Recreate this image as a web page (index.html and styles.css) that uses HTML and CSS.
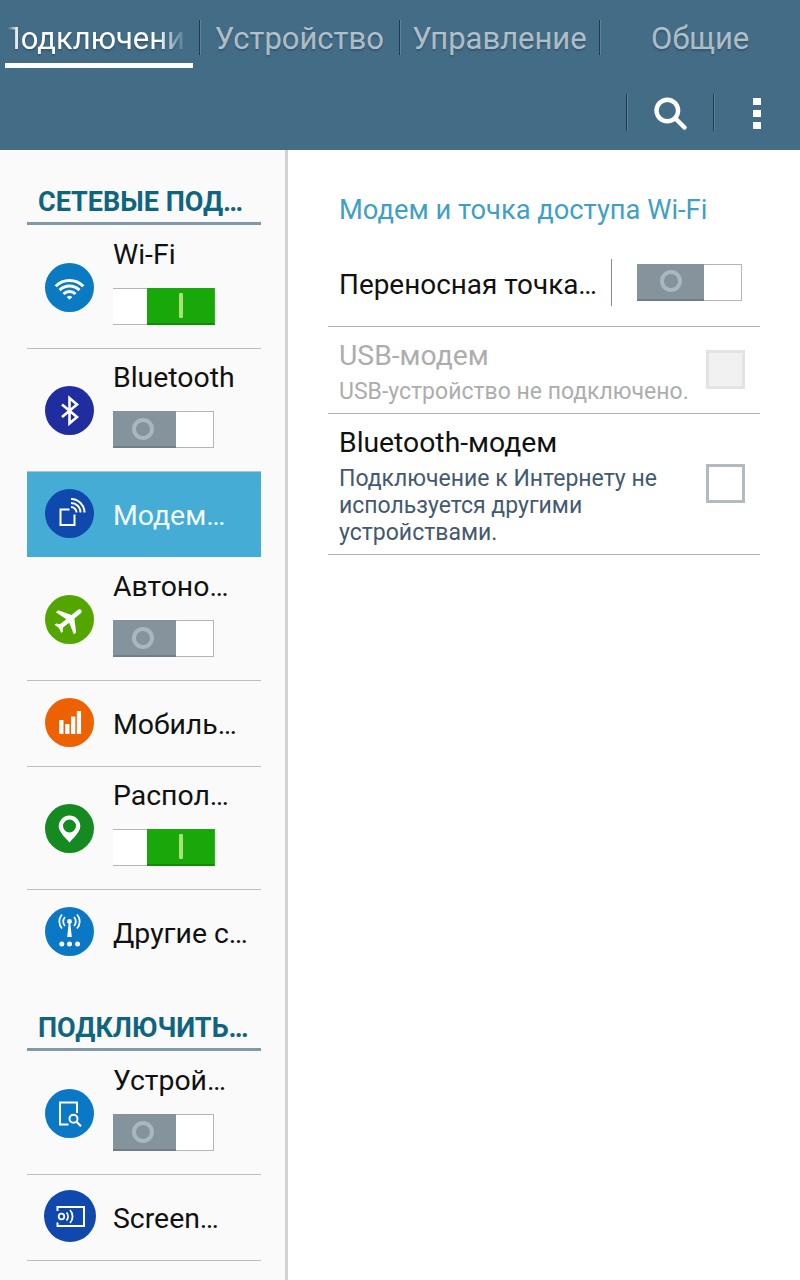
FILE: index.html
```html
<!DOCTYPE html>
<html lang="ru">
<head>
    <meta charset="UTF-8">
    <meta name="viewport" content="width=device-width, initial-scale=1.0">
    <title>Настройки</title>
    <link rel="stylesheet" href="styles.css">
</head>
<body>
    <!-- Top bar -->
    <header class="topbar">
        <nav class="tabs">
            <div class="tab tab-active"><div class="tab-clip"><span class="tab-label">Подключение</span></div></div>
            <span class="bar-sep"></span>
            <div class="tab">Устройство</div>
            <span class="bar-sep"></span>
            <div class="tab tab-third">Управление</div>
            <span class="bar-sep"></span>
            <div class="tab tab-last">Общие</div>
        </nav>
        <div class="actions">
            <span class="bar-sep"></span>
            <div class="action action-search">
                <svg width="36" height="36" viewBox="0 0 36 36"><circle cx="15.3" cy="15.5" r="10.8" fill="none" stroke="#fff" stroke-width="4.4"/><path d="M24 24l8.500 8.500" stroke="#fff" stroke-width="4.500" stroke-linecap="round"/></svg>
            </div>
            <span class="bar-sep"></span>
            <div class="action action-more">
                <i class="dot"></i><i class="dot"></i><i class="dot"></i>
            </div>
        </div>
    </header>

    <main class="content">
        <!-- Left list -->
        <aside class="sidebar">
            <h2 class="section-title">СЕТЕВЫЕ ПОД…</h2>
            <ul class="list">
                <li class="item">
                    <span class="icon icon-wifi">
                        <svg viewBox="0 0 49 49"><path d="M10.7 23.2a19.500 19.500 0 0 1 27.600 0M14.600 27.100a14 14 0 0 1 19.800 0M18.500 31a8.500 8.500 0 0 1 12 0" fill="none" stroke="#fff" stroke-width="3"/><path d="M21.700 34a4 4 0 0 1 5.600 0l-2.800 2.800z" fill="#fff"/></svg>
                    </span>
                    <div class="item-body">
                        <div class="item-label">Wi-Fi</div>
                        <div class="toggle toggle-on"><span class="toggle-white"></span><span class="toggle-knob"><i></i></span></div>
                    </div>
                </li>
                <li class="item">
                    <span class="icon icon-bluetooth">
                        <svg viewBox="0 0 49 49"><path d="M17 18.500l15 12.500-7.500 6.500V12l7.500 6.500L17 31" fill="none" stroke="#fff" stroke-width="2.600"/></svg>
                    </span>
                    <div class="item-body">
                        <div class="item-label">Bluetooth</div>
                        <div class="toggle"><span class="toggle-knob"><i></i></span><span class="toggle-white"></span></div>
                    </div>
                </li>
                <li class="item item-plain item-selected">
                    <span class="icon icon-modem">
                        <svg viewBox="0 0 49 49"><path d="M24.500 20.500H15.500V36H29.500V25.500" fill="none" stroke="#fff" stroke-width="2"/><path d="M26 18a5.500 5.500 0 0 1 5.500 5.500M26 14a9.500 9.500 0 0 1 9.500 9.500M26 10a13.500 13.500 0 0 1 13.500 13.500" fill="none" stroke="#fff" stroke-width="2"/></svg>
                    </span>
                    <div class="item-label">Модем…</div>
                </li>
                <li class="item">
                    <span class="icon icon-plane">
                        <svg viewBox="0 0 49 49"><g transform="translate(24.500 24.500) rotate(51) scale(1.500) translate(-11.500 -12)"><path d="M21 16v-2l-8-5V3.500c0-.83-.67-1.500-1.500-1.500S10 2.670 10 3.500V9l-8 5v2l8-2.500V19l-2 1.500V22l3.500-1 3.500 1v-1.500L13 19v-5.500l8 2.500z" fill="#fff"/></g></svg>
                    </span>
                    <div class="item-body">
                        <div class="item-label">Автоно…</div>
                        <div class="toggle"><span class="toggle-knob"><i></i></span><span class="toggle-white"></span></div>
                    </div>
                </li>
                <li class="item item-plain">
                    <span class="icon icon-mobile">
                        <svg viewBox="0 0 49 49"><path d="M14.200 22h4.300v14h-4.300zM20.200 26h4.300v10h-4.300zM26 18.500h4.300V36H26zM31.800 13h4.300v23h-4.300z" fill="#fff"/></svg>
                    </span>
                    <div class="item-label">Мобиль…</div>
                </li>
                <li class="item">
                    <span class="icon icon-location">
                        <svg viewBox="0 0 49 49"><path fill-rule="evenodd" d="M24.500 11.500A10.800 10.800 0 0 1 35.300 22.300c0 5-5.500 10.500-10.800 16.200-5.300-5.700-10.800-11.200-10.800-16.200A10.800 10.800 0 0 1 24.500 11.500zm0 4a6.500 6.500 0 1 0 0 13 6.500 6.500 0 0 0 0-13z" fill="#fff"/></svg>
                    </span>
                    <div class="item-body">
                        <div class="item-label">Распол…</div>
                        <div class="toggle toggle-on"><span class="toggle-white"></span><span class="toggle-knob"><i></i></span></div>
                    </div>
                </li>
                <li class="item item-plain item-last">
                    <span class="icon icon-other">
                        <svg viewBox="0 0 49 49"><circle cx="24.500" cy="14.500" r="2.400" fill="#fff"/><path d="M23.700 16h1.600l1.500 14h-4.600z" fill="#fff"/><path d="M20 10a6.500 6.500 0 0 0 0 9M29 10a6.500 6.500 0 0 1 0 9M17 7.500a10.500 10.500 0 0 0 0 14M32 7.500a10.500 10.500 0 0 1 0 14" fill="none" stroke="#fff" stroke-width="1.800"/><circle cx="16.800" cy="37" r="2.500" fill="#fff"/><circle cx="24.500" cy="37" r="2.500" fill="#fff"/><circle cx="32.500" cy="37" r="2.500" fill="#fff"/></svg>
                    </span>
                    <div class="item-label">Другие с…</div>
                </li>
            </ul>

            <h2 class="section-title">ПОДКЛЮЧИТЬ…</h2>
            <ul class="list">
                <li class="item">
                    <span class="icon icon-device">
                        <svg viewBox="0 0 49 49"><path d="M23.500 35.500H15V13.500H32V24" fill="none" stroke="#fff" stroke-width="2"/><circle cx="28.500" cy="29.800" r="4" fill="none" stroke="#fff" stroke-width="2"/><path d="M31.500 32.800l4.500 4.500" stroke="#fff" stroke-width="2.200"/></svg>
                    </span>
                    <div class="item-body">
                        <div class="item-label">Устрой…</div>
                        <div class="toggle"><span class="toggle-knob"><i></i></span><span class="toggle-white"></span></div>
                    </div>
                </li>
                <li class="item item-plain">
                    <span class="icon icon-screen">
                        <svg viewBox="0 0 52 52"><path d="M13.500 21v-4H40V36H13.500V32.500" fill="none" stroke="#fff" stroke-width="2"/><circle cx="17.500" cy="26.500" r="2.800" fill="none" stroke="#fff" stroke-width="1.800"/><path d="M22.500 22.500a6 6 0 0 1 0 8M26 20a9.500 9.500 0 0 1 0 13" fill="none" stroke="#fff" stroke-width="1.800"/></svg>
                    </span>
                    <div class="item-label">Screen…</div>
                </li>
            </ul>
        </aside>

        <!-- Right pane -->
        <section class="pane">
            <h1 class="pane-title">Модем и точка доступа Wi-Fi</h1>

            <div class="row row-hotspot">
                <div class="row-title">Переносная точка…</div>
                <span class="row-sep"></span>
                <div class="toggle toggle-big"><span class="toggle-knob"><i></i></span><span class="toggle-white"></span></div>
            </div>

            <div class="row row-usb row-disabled">
                <div class="row-text">
                    <div class="row-title">USB-модем</div>
                    <div class="row-sub">USB-устройство не подключено.</div>
                </div>
                <span class="checkbox"></span>
            </div>

            <div class="row row-bt">
                <div class="row-text">
                    <div class="row-title">Bluetooth-модем</div>
                    <div class="row-sub">Подключение к Интернету не используется другими устройствами.</div>
                </div>
                <span class="checkbox"></span>
            </div>
        </section>
    </main>
</body>
</html>
```

FILE: styles.css
```css
* {
    margin: 0;
    padding: 0;
    box-sizing: border-box;
}

html, body {
    height: 1280px;
    overflow: hidden;
}

body {
    font-family: 'Roboto', sans-serif;
    background: #fff;
    color: #111;
}

/* top bar */
.topbar {
    height: 150px;
    background: #436c86;
}

.tabs {
    display: flex;
    height: 76px;
}

.tab {
    width: 199px;
    height: 76px;
    padding-top: 1px;
    line-height: 76px;
    text-align: center;
    font-size: 31px;
    color: rgba(255, 255, 255, 0.6);
    text-shadow: 0 2px 2px rgba(0, 0, 0, 0.2);
}

.tab-third {
    width: 200px;
}

.tab-last {
    width: 200px;
}

.tab-active {
    width: 188px;
    height: 68px;
    margin: 0 6px 0 5px;
    padding: 1px 6px 0 3px;
    border-bottom: 5px solid #fff;
    color: #fff;
}

.tab-clip {
    display: flex;
    justify-content: center;
    overflow: hidden;
    -webkit-mask-image: linear-gradient(90deg, transparent 0, #fff 10px, #fff 150px, transparent 179px);
    mask-image: linear-gradient(90deg, transparent 0, #fff 10px, #fff 150px, transparent 179px);
}

.tab-label {
    flex: none;
    margin-left: 5px;
}

.bar-sep {
    flex: none;
    width: 1px;
    height: 35px;
    margin-top: 20px;
    background: #1d3c52;
    box-shadow: 1px 0 0 rgba(255, 255, 255, 0.15);
}

.actions {
    display: flex;
    justify-content: flex-end;
    height: 74px;
}

.actions .bar-sep {
    height: 37px;
    margin-top: 18px;
}

.action {
    display: flex;
    align-items: center;
    justify-content: center;
    height: 74px;
}

.action-search {
    width: 86px;
}

.action-more {
    width: 86px;
    flex-direction: column;
    gap: 5px;
}

.dot {
    display: block;
    width: 8px;
    height: 7px;
    background: #fff;
}

/* main area */
.content {
    display: flex;
    height: 1130px;
}

.sidebar {
    width: 288px;
    flex: none;
    padding: 0 24px 0 27px;
    background: #fafafa;
    border-right: 3px solid #d2d2d2;
}

.section-title {
    height: 75px;
    padding: 36px 0 0 11px;
    font-size: 27px;
    line-height: 32px;
    font-weight: 700;
    color: #0f6580;
    border-bottom: 3px solid #7f9aa6;
    white-space: nowrap;
}

.list {
    list-style: none;
    padding-top: 1px;
}

.item {
    display: flex;
    align-items: center;
    height: 123px;
    border-bottom: 1px solid #bdbdbd;
}

.item-plain {
    height: 86px;
}

.item-last {
    border-bottom: none;
}

.item-selected {
    background: #45acd6;
    border-bottom-color: #fafafa;
    color: #fff;
}

.item-selected .item-label {
    color: #f2fbff;
}

.icon {
    flex: none;
    display: block;
    width: 49px;
    height: 49px;
    margin-left: 18px;
    border-radius: 50%;
}

.item-plain .icon {
    margin-bottom: 3px;
}

.icon svg {
    display: block;
    width: 100%;
    height: 100%;
}

.icon-wifi { background: #0a7bc3; }
.icon-bluetooth { background: #1f2d9f; }
.icon-modem { background: #0f49ad; }
.icon-plane { background: #53a500; }
.icon-mobile { background: #ee6100; }
.icon-location { background: #158a20; }
.icon-other { background: #0a78c4; }
.icon-device { background: #0a78c4; }

.icon-screen {
    width: 52px;
    height: 52px;
    margin-left: 17px;
    background: #1148ad;
}

.item-body {
    align-self: flex-start;
    margin-left: 19px;
    padding-top: 11px;
}

.item > .item-label {
    margin-left: 19px;
    padding-top: 2px;
}

.icon-screen + .item-label {
    margin-left: 17px;
}

.item-label {
    font-size: 28.4px;
    line-height: 36px;
    color: #111;
    white-space: nowrap;
}

/* switches */
.toggle {
    display: flex;
    width: 101px;
    height: 37px;
    margin-top: 15px;
}

.toggle-white {
    flex: 1;
    background: #fff;
    border: 1px solid #b5b5b5;
    border-left: none;
}

.toggle-knob {
    flex: none;
    display: flex;
    align-items: center;
    justify-content: center;
    width: 63px;
    padding-right: 3px;
    background: #84939c;
    border-bottom: 2px solid #6f7e87;
}

.toggle-knob i {
    display: block;
    width: 22px;
    height: 22px;
    border-radius: 50%;
    border: 4px solid #a9b8bf;
}

.toggle-on {
    width: 102px;
}

.toggle-on .toggle-white {
    flex: none;
    width: 34px;
    border-right: none;
}

.toggle-on .toggle-knob {
    width: 68px;
    padding-right: 0;
    background: #18a80a;
    border-bottom-color: #138a08;
    border-right: 1px solid #2fb324;
}

.toggle-on .toggle-knob i {
    width: 4px;
    height: 25px;
    border: none;
    border-radius: 1px;
    background: #a5e374;
}

.toggle-big {
    width: 105px;
    margin-top: 0;
    flex: none;
}

.toggle-big .toggle-knob {
    width: 67px;
    padding-right: 0;
}

/* right pane */
.pane {
    flex: 1;
    padding: 0 40px;
}

.pane-title {
    padding: 43px 0 0 11px;
    font-size: 27.3px;
    line-height: 34px;
    font-weight: 400;
    color: #3f9fc4;
    white-space: nowrap;
}

.row {
    display: flex;
    align-items: center;
    padding-left: 11px;
    border-bottom: 1px solid #b0b0b0;
}

.row-hotspot {
    height: 100px;
    padding-top: 11px;
    padding-right: 18px;
}

.row-usb {
    height: 87px;
}

.row-bt {
    height: 141px;
}

.row-text {
    flex: 1;
    padding-top: 3px;
}

.row-title {
    font-size: 28.3px;
    line-height: 34px;
    color: #111;
    white-space: nowrap;
}

.row-hotspot .row-title {
    flex: 1;
    padding-top: 6px;
    font-size: 27.9px;
}

.row-sep {
    flex: none;
    width: 1px;
    height: 47px;
    margin-right: 25px;
    background: #8a8a8a;
}

.row-sub {
    margin-top: 5px;
    font-size: 23px;
    line-height: 27px;
    color: #44596f;
    max-width: 350px;
}

.row-usb .row-sub {
    max-width: none;
    white-space: nowrap;
}

.checkbox {
    flex: none;
    width: 39px;
    height: 39px;
    margin: 0 15px 2px 0;
    border: 3px solid #b2bbc0;
    background: #fff;
}

.row-disabled .row-title,
.row-disabled .row-sub {
    color: #adadad;
}

.row-disabled .checkbox {
    background: #f1f1f1;
    border-color: #e3e3e3;
}
```
